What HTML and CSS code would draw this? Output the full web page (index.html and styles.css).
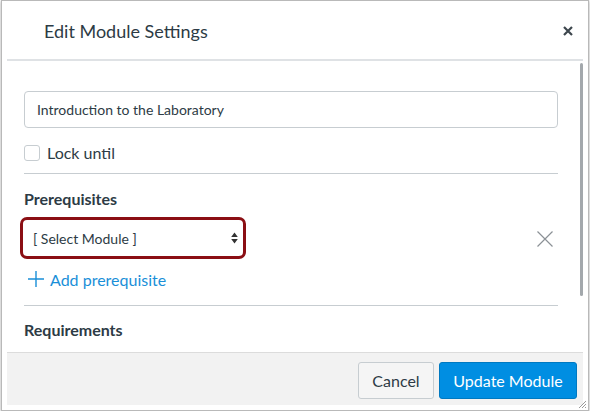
FILE: index.html
```html
<!DOCTYPE html>
<html>
<head>
<meta charset="utf-8">
<link rel="stylesheet" href="styles.css">
</head>
<body>
<div class="dialog">
  <div class="header">
    <h1 class="title">Edit Module Settings</h1>
    <svg class="close" width="10" height="10" viewBox="0 0 10 10"><path d="M1 1L9 9M9 1L1 9" stroke="#3d464d" stroke-width="2.2" stroke-linecap="butt"/></svg>
  </div>
  <div class="body">
    <div class="content">
      <div class="text-input">Introduction to the Laboratory</div>
      <label class="check-row"><span class="checkbox"></span><span class="check-label">Lock until</span></label>
      <div class="sep sep-1"></div>
      <h2 class="section-title prereq-title">Prerequisites</h2>
      <div class="prereq-row">
        <div class="select-outline">
          <div class="select">
            <span>[ Select Module ]</span>
            <svg class="arrows" width="7" height="12" viewBox="0 0 7 12"><path d="M3.5 0.5L6.8 5H0.2Z M3.5 11.5L6.8 7H0.2Z" fill="#333"/></svg>
          </div>
        </div>
        <svg class="remove" width="16" height="16" viewBox="0 0 16 16"><path d="M0.5 0.5L15.5 15.5M15.5 0.5L0.5 15.5" stroke="#8b9196" stroke-width="1.2"/></svg>
      </div>
      <div class="add-link">
        <svg class="plus" width="16" height="16" viewBox="0 0 16 16"><path d="M8 0V16M0 8H16" stroke="#1a8fd8" stroke-width="1.4"/></svg>
        <span>Add prerequisite</span>
      </div>
      <div class="sep sep-2"></div>
      <h2 class="section-title req-title">Requirements</h2>
    </div>
    <div class="scrollbar"></div>
  </div>
  <div class="footer">
    <button class="btn btn-cancel">Cancel</button>
    <button class="btn btn-primary">Update Module</button>
  </div>
  <svg class="resize" width="8" height="8" viewBox="0 0 8 8"><path d="M8 1L1 8M8 4L4 8M8 7L7 8" stroke="#9a9a9a" stroke-width="1"/></svg>
</div>
</body>
</html>
```

FILE: styles.css
```css
html, body {
  margin: 0;
  padding: 0;
  background: #ffffff;
}

body {
  font-family: Lato, "Open Sans", "Liberation Sans", sans-serif;
  color: #2d3b45;
}

.dialog {
  position: relative;
  box-sizing: border-box;
  width: 588px;
  height: 411px;
  margin-left: 1px;
  border: 1px solid #b9b9b9;
  padding: 5px;
  background: #ffffff;
  box-shadow: 0 1px 3px rgba(0, 0, 0, 0.35);
  display: flex;
  flex-direction: column;
}

.header {
  height: 55px;
  box-sizing: border-box;
  padding: 0 10px 3px 37px;
  display: flex;
  align-items: center;
  justify-content: space-between;
  border-bottom: 2px solid #dfe2e5;
  flex: none;
}

.title {
  margin: 0;
  font-size: 18px;
  font-weight: 400;
  color: #2d3b45;
  line-height: 22px;
}

.close {
  display: block;
}

.body {
  flex: 1;
  display: flex;
  overflow: hidden;
  min-height: 0;
}

.content {
  width: 534px;
  padding: 30px 0 0 17px;
  flex: none;
}

.scrollbar {
  width: 3px;
  height: 233px;
  margin-top: 2px;
  margin-left: auto;
  background: #a3a8ac;
  border-radius: 2px;
}

.text-input {
  box-sizing: border-box;
  height: 37px;
  border: 1px solid #c7cdd1;
  border-radius: 4px;
  padding: 0 12px;
  display: flex;
  align-items: center;
  font-size: 14px;
  color: #2d3b45;
}

.check-row {
  display: flex;
  align-items: center;
  margin-top: 17px;
  height: 16px;
}

.checkbox {
  box-sizing: border-box;
  width: 16px;
  height: 16px;
  border: 1px solid #c7cdd1;
  border-radius: 3px;
  background: #fff;
}

.check-label {
  margin-left: 7px;
  font-size: 16px;
  line-height: 20px;
}

.sep {
  height: 1px;
  background: #c7cdd1;
}

.sep-1 {
  margin-top: 12px;
}

.section-title {
  margin: 0;
  font-size: 16px;
  font-weight: 700;
  line-height: 20px;
  color: #2d3b45;
}

.prereq-title {
  margin-top: 15px;
}

.prereq-row {
  display: flex;
  align-items: center;
  justify-content: space-between;
  margin-top: 8px;
  margin-left: -4px;
}

.select-outline {
  box-sizing: border-box;
  width: 226px;
  height: 42px;
  border: 3px solid #8b0f14;
  border-radius: 7px;
  background: #fff;
}

.select {
  height: 100%;
  display: flex;
  align-items: center;
  justify-content: space-between;
  padding: 0 5px 0 10px;
  font-size: 14px;
  color: #2d3b45;
}

.arrows {
  display: block;
}

.remove {
  display: block;
  margin-right: 5px;
  margin-top: 2px;
}

.add-link {
  display: flex;
  align-items: center;
  margin-top: 10px;
  margin-left: 4px;
  height: 20px;
  color: #1a8fd8;
  font-size: 16px;
}

.plus {
  display: block;
  margin-right: 6px;
}

.sep-2 {
  margin-top: 16px;
}

.req-title {
  margin-top: 14px;
}

.footer {
  flex: none;
  height: 53px;
  box-sizing: border-box;
  background: #f2f2f2;
  border-top: 1px solid #dcdcdc;
  padding: 9px 6px 0 0;
  display: flex;
  justify-content: flex-end;
  align-items: flex-start;
  gap: 5px;
}

.btn {
  height: 37px;
  box-sizing: border-box;
  border-radius: 3px;
  font-family: Lato, "Open Sans", "Liberation Sans", sans-serif;
  font-size: 16px;
  padding: 0;
  white-space: nowrap;
  cursor: pointer;
}

.btn-cancel {
  width: 76px;
  background: #f5f5f5;
  border: 1px solid #c7cdd1;
  color: #2d3b45;
}

.btn-primary {
  width: 138px;
  background: #008ee2;
  border: 1px solid #0079c1;
  color: #ffffff;
}

.resize {
  position: absolute;
  right: 2px;
  bottom: 2px;
  display: block;
}
```
